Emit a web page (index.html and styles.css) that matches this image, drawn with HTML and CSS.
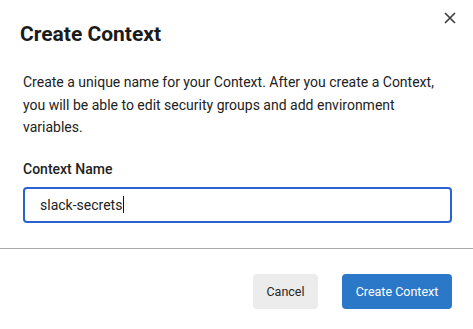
FILE: index.html
```html
<!DOCTYPE html>
<html>
<head>
<meta charset="utf-8">
<link rel="stylesheet" href="styles.css">
</head>
<body>
<div class="dialog">
  <div class="header">
    <h1 class="title">Create Context</h1>
    <button class="close" aria-label="Close">
      <svg width="12" height="12" viewBox="0 0 12 12"><path d="M1 1L11 11M11 1L1 11" stroke="#3a3a3a" stroke-width="1.6" fill="none"/></svg>
    </button>
  </div>
  <div class="body">
    <p class="desc">Create a unique name for your Context. After you create a Context, you will be able to edit security groups and add environment variables.</p>
    <label class="label">Context Name</label>
    <div class="input"><span class="value">slack-secrets</span><span class="caret"></span></div>
  </div>
  <div class="footer">
    <button class="btn btn-cancel">Cancel</button>
    <button class="btn btn-primary">Create Context</button>
  </div>
</div>
</body>
</html>
```
FILE: styles.css
```css
* { box-sizing: border-box; }
html, body { margin: 0; padding: 0; background: #fff; }
body { font-family: Roboto, "Liberation Sans", sans-serif; color: #1f1f1f; width: 473px; height: 329px; overflow: hidden; }
.dialog { display: flex; flex-direction: column; }
.header { display: flex; justify-content: space-between; align-items: flex-start; padding: 0 17px 0 20px; }
.title { margin: 22px 0 0; font-size: 21px; font-weight: 700; line-height: 25px; color: #1b1b1b; }
.close { margin-top: 12px; padding: 0; border: 0; background: none; width: 12px; height: 12px; display: flex; }
.body { padding: 0 21px 0 23px; }
.desc { margin: 24px 0 0; font-size: 14px; line-height: 22.5px; color: #222; }
.label { display: block; margin-top: 20px; font-size: 14px; font-weight: 500; line-height: 20px; color: #222; }
.input { margin-top: 8px; height: 36px; border: 2px solid #2a62d0; border-radius: 4px; display: flex; align-items: center; padding-left: 15px; font-size: 14px; color: #222; }
.caret { width: 1px; height: 17px; background: #111; margin-left: 1px; }
.footer { margin-top: 25px; border-top: 1px solid #aaa; display: flex; justify-content: flex-end; gap: 24px; padding: 25px 21px 0 0; }
.btn { height: 35px; border: 0; border-radius: 4px; font-family: Roboto, "Liberation Sans", sans-serif; font-size: 12.5px; font-weight: 400; padding: 0; }
.btn-cancel { width: 65px; background: #ececec; color: #262626; }
.btn-primary { width: 110px; background: #2b78c9; color: #fff; }
```
